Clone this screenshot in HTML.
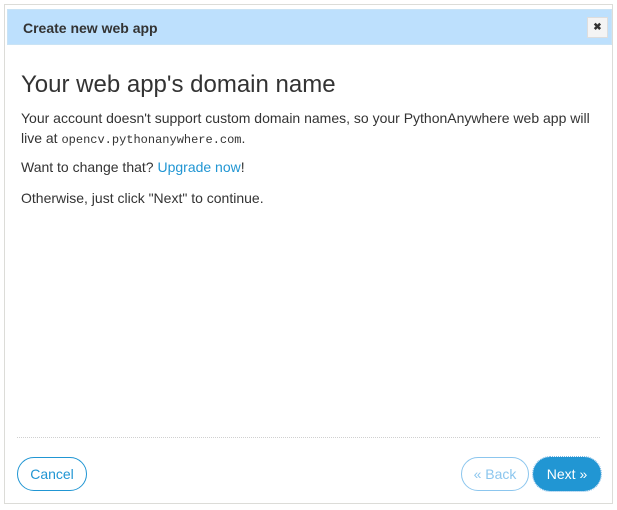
<!DOCTYPE html>
<html><head><style>
body{margin:0;width:617px;height:510px;background:#fff;font-family:"Liberation Sans",sans-serif;position:relative;overflow:hidden}
.box{position:absolute;left:4px;top:4px;width:607px;height:498px;border:1px solid #dcdcd8}
.hdr{position:absolute;left:7px;top:9px;width:603px;height:34px;background:#bde0fd;border:1px solid #c9e3f5}
.hdr span{position:absolute;left:15px;top:10px;font-size:14px;font-weight:bold;color:#333}
.x{position:absolute;left:579px;top:7px;width:19px;height:19px;background:#f4f4f4;border:1px solid #ddd;font-size:10px;line-height:19px;text-align:center;font-weight:bold;color:#333}
h1{position:absolute;left:21px;top:71px;margin:0;font-size:24px;font-weight:normal;color:#333}
p{position:absolute;left:21px;margin:0;font-size:14px;color:#333;line-height:20px}
code{font-family:"Liberation Mono",monospace;font-size:12px}
a{color:#2196d3;text-decoration:none}
.hr{position:absolute;left:17px;top:437px;width:583px;border-top:1px dotted #d0d0d0}
.btn{position:absolute;top:457px;height:32px;border:1px solid #2196d3;border-radius:17px;font-size:14px;line-height:32px;text-align:center;color:#2196d3;box-sizing:content-box}
</style></head><body>
<div class="box"></div>
<div class="hdr"><span>Create new web app</span><div class="x">✖</div></div>
<h1>Your web app's domain name</h1>
<p style="top:108px">Your account doesn't support custom domain names, so your PythonAnywhere web app will<br>live at <code>opencv.pythonanywhere.com</code>.</p>
<p style="top:157px">Want to change that? <a>Upgrade now</a>!</p>
<p style="top:188px">Otherwise, just click "Next" to continue.</p>
<div class="hr"></div>
<div class="btn" style="left:17px;width:68px">Cancel</div>
<div class="btn" style="left:461px;width:66px;border-color:#8cc6ee;color:#8cc6ee">« Back</div>
<div class="btn" style="left:533px;width:66px;background:#2196d3;color:#fff;outline:1px dotted #7ab8e6">Next »</div>
</body></html>
